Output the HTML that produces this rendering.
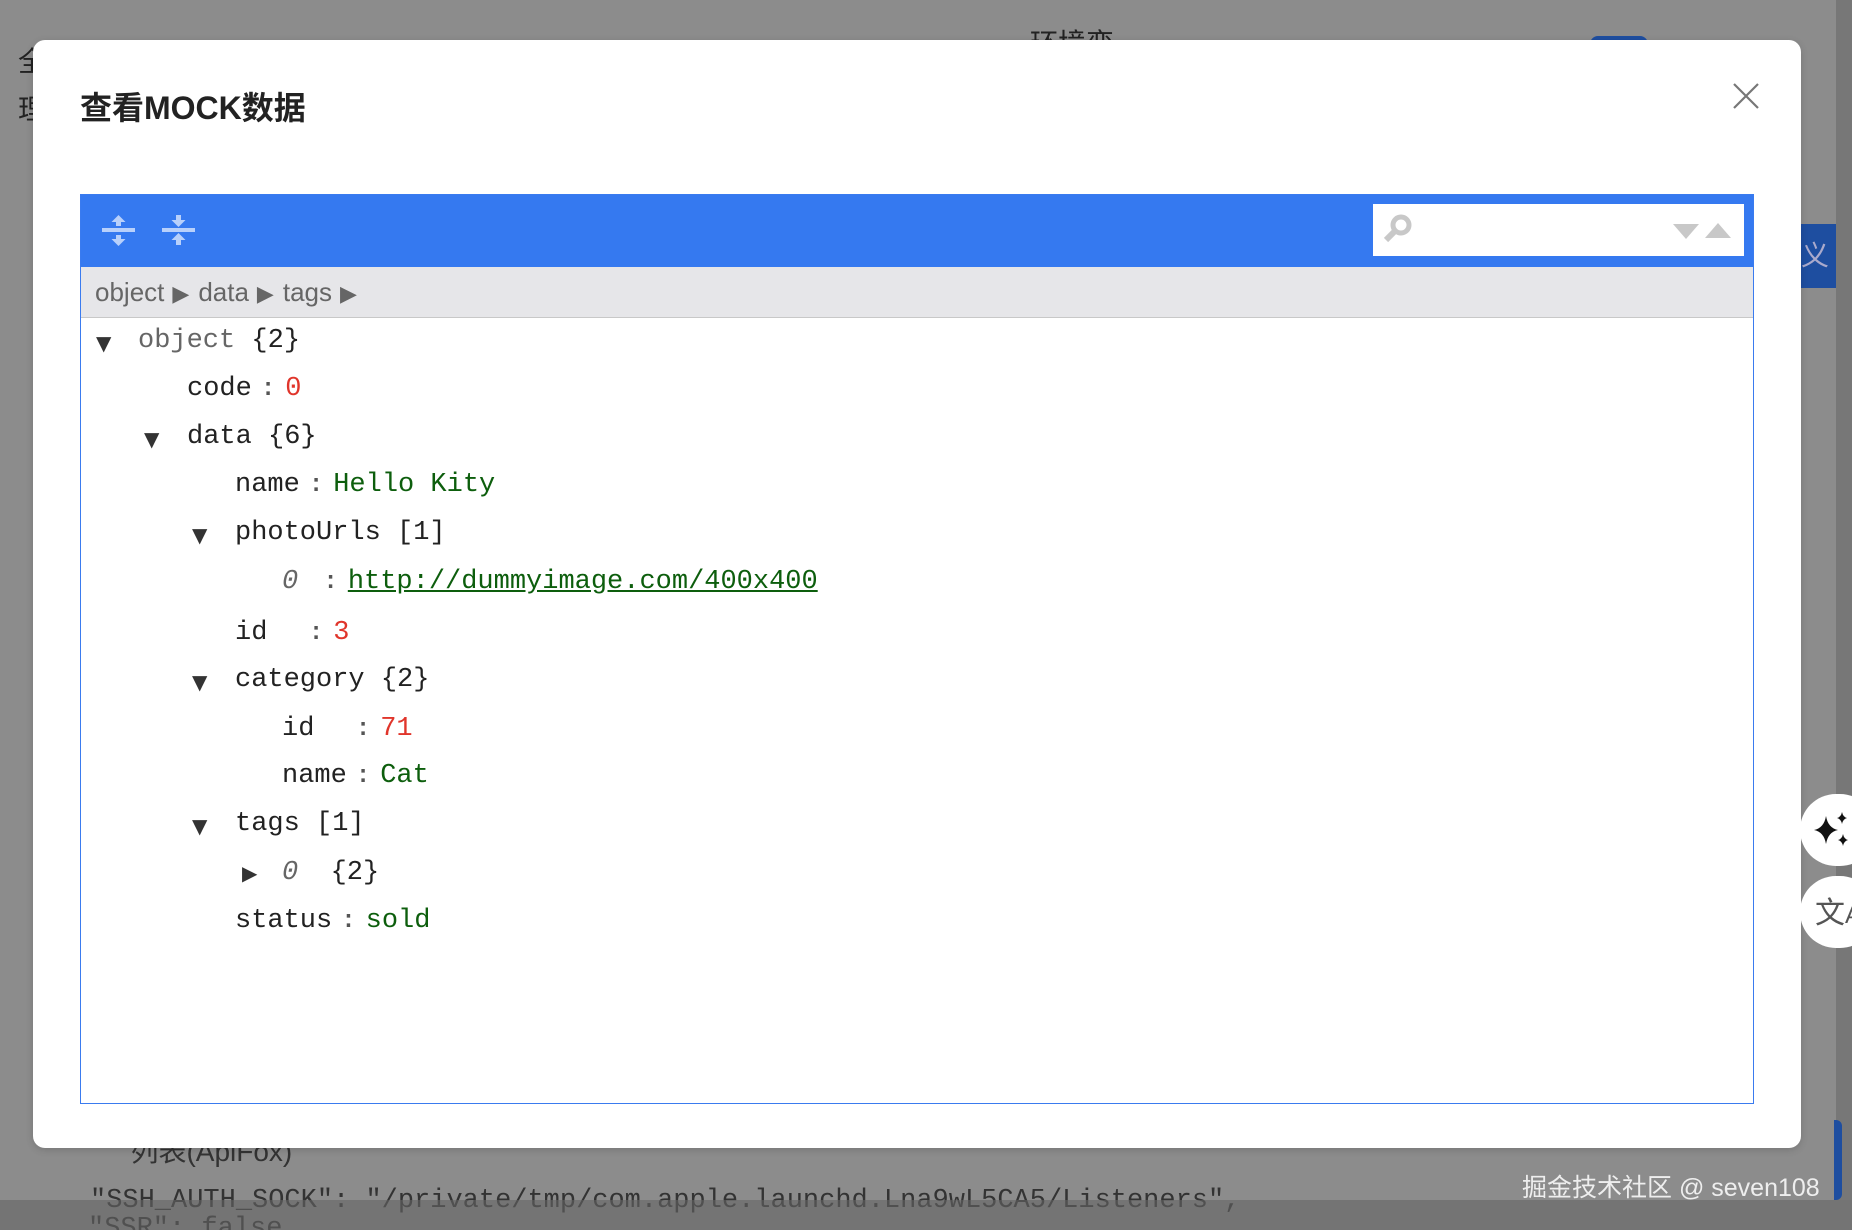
<!DOCTYPE html>
<html><head><meta charset="utf-8">
<style>
*{margin:0;padding:0;box-sizing:border-box}
html,body{width:1852px;height:1230px;overflow:hidden;background:#8c8c8c;font-family:"Liberation Sans","Noto Sans CJK SC",sans-serif;position:relative}
.abs{position:absolute}
.modal{left:33px;top:40px;width:1768px;height:1108px;background:#fff;border-radius:12px;box-shadow:0 2px 8px rgba(0,0,0,.15)}
.title{left:80px;top:83px;font-size:32px;font-weight:bold;color:#222;white-space:nowrap}
.box{left:80px;top:194px;width:1674px;height:910px;border:1px solid #3a7bef;background:#fff}
.bar{left:0;top:0;width:1672px;height:72px;background:#3579f0}
.crumb{left:0;top:72px;width:1672px;height:51px;background:#e6e6e9;border-bottom:1px solid #c8c8c8;font-size:26px;color:#666;line-height:51px;padding-left:14px;white-space:nowrap}
.crumb b{font-weight:normal;font-family:"DejaVu Sans",sans-serif;font-size:22px;margin:0 9px 0 8px}
.row{position:absolute;font-family:"Liberation Mono",monospace;font-size:27px;color:#222;white-space:pre;line-height:34px}
.tri{position:absolute;font-size:20px;color:#333;font-family:"DejaVu Sans",sans-serif;line-height:34px}
.g{color:#666}.r{color:#e0352b}.s{color:#0d5e0d}
.c{color:#555;font-weight:bold;font-size:24px;margin:0 10px 0 9px}
.u{color:#0d5e0d;text-decoration:underline}
</style></head><body>
<div class="abs" style="left:76px;top:1130px;font-size:28px;color:#333;font-family:'Liberation Sans','Noto Sans CJK SC',sans-serif">&nbsp;&nbsp;&nbsp;&nbsp;&nbsp;&nbsp;&nbsp;列表(ApiFox)</div>
<div class="abs" style="left:90px;top:1186px;font-family:'Liberation Mono',monospace;font-size:27px;color:#333;white-space:pre">"SSH_AUTH_SOCK": "/private/tmp/com.apple.launchd.Lna9wL5CA5/Listeners",</div>
<div class="abs" style="left:88px;top:1214px;font-family:'Liberation Mono',monospace;font-size:27px;color:#333">"SSR": false</div>
<div class="abs" style="left:0;top:1200px;width:1852px;height:30px;background:rgba(100,100,100,.6)"></div>
<div class="abs" style="left:18px;top:40px;font-size:28px;color:#222">全</div>
<div class="abs" style="left:18px;top:88px;font-size:28px;color:#222">理</div>
<div class="abs" style="left:1030px;top:22px;font-size:28px;color:#222">环境变</div>
<div class="abs" style="left:1590px;top:36px;width:58px;height:12px;background:#1e4ea0;border-radius:8px 8px 0 0"></div>
<div class="abs" style="left:1801px;top:224px;width:35px;height:64px;background:#1e4ea0;color:#aac;font-size:28px;line-height:64px">义</div>
<div class="abs" style="left:1836px;top:0;width:16px;height:1200px;background:#777"></div>
<div class="abs" style="left:1834px;top:1120px;width:8px;height:80px;background:#1e4ea0;border-radius:0 6px 6px 0"></div>
<div class="abs" style="left:1522px;top:1168px;font-size:25px;color:#eee;white-space:nowrap">掘金技术社区 @ seven108</div>

<div class="abs modal"></div>
<div class="abs title">查看MOCK数据</div>
<svg class="abs" style="left:1732px;top:82px" width="28" height="28" viewBox="0 0 28 28"><path d="M2 2L26 26M26 2L2 26" stroke="#777" stroke-width="2.2"/></svg>

<div class="abs box">
 <div class="abs bar">
  <svg class="abs" style="left:18px;top:14px" width="40" height="44" viewBox="0 0 40 44">
   <g fill="#b8d0fb"><rect x="3" y="19" width="33" height="4"/><path d="M19.5 6l7 7h-4.5v4h-5v-4h-4.5z"/><path d="M19.5 37l7-7h-4.5v-4h-5v4h-4.5z"/></g>
  </svg>
  <svg class="abs" style="left:78px;top:14px" width="40" height="44" viewBox="0 0 40 44">
   <g fill="#b8d0fb"><rect x="3" y="19" width="33" height="4"/><path d="M19.5 18l7-7h-4.5v-5h-5v5h-4.5z"/><path d="M19.5 24l7 7h-4.5v5h-5v-5h-4.5z"/></g>
  </svg>
  <div class="abs" style="left:1292px;top:9px;width:371px;height:52px;background:#fff">
   <svg class="abs" style="left:8px;top:9px" width="34" height="34" viewBox="0 0 34 34"><circle cx="20" cy="12" r="8" fill="none" stroke="#c8c8c8" stroke-width="5"/><path d="M14 18L5 27" stroke="#c8c8c8" stroke-width="6"/></svg>
   <svg class="abs" style="left:298px;top:18px" width="64" height="18" viewBox="0 0 64 18"><path d="M2 2h26l-13 15z" fill="#c8c8c8"/><path d="M34 16h26l-13-15z" fill="#c8c8c8"/></svg>
  </div>
 </div>
 <div class="abs crumb">object<b>▶</b>data<b>▶</b>tags<b>▶</b></div>
</div>

<div class="tri" style="left:96px;top:326px">▼</div>
<div class="row" style="left:138px;top:324px"><span class="g">object</span> {2}</div>
<div class="row" style="left:187px;top:372px">code<span class="c">:</span><span class="r">0</span></div>
<div class="tri" style="left:144px;top:422px">▼</div>
<div class="row" style="left:187px;top:420px">data {6}</div>
<div class="row" style="left:235px;top:468px">name<span class="c">:</span><span class="s">Hello Kity</span></div>
<div class="tri" style="left:192px;top:518px">▼</div>
<div class="row" style="left:235px;top:516px">photoUrls [1]</div>
<div class="row" style="left:282px;top:565px"><span class="g" style="font-style:italic">0</span> <span class="c">:</span><span class="u">http://dummyimage.com/400x400</span></div>
<div class="row" style="left:235px;top:616px">id  <span class="c">:</span><span class="r">3</span></div>
<div class="tri" style="left:192px;top:665px">▼</div>
<div class="row" style="left:235px;top:663px">category {2}</div>
<div class="row" style="left:282px;top:712px">id  <span class="c">:</span><span class="r">71</span></div>
<div class="row" style="left:282px;top:759px">name<span class="c">:</span><span class="s">Cat</span></div>
<div class="tri" style="left:192px;top:809px">▼</div>
<div class="row" style="left:235px;top:807px">tags [1]</div>
<div class="tri" style="left:242px;top:856px">▶</div>
<div class="row" style="left:282px;top:856px"><span class="g" style="font-style:italic">0</span>  {2}</div>
<div class="row" style="left:235px;top:904px">status<span class="c">:</span><span class="s">sold</span></div>

<div class="abs" style="left:1800px;top:794px;width:76px;height:72px;border-radius:36px;background:#fff"></div>
<svg class="abs" style="left:1812px;top:810px" width="40" height="40" viewBox="0 0 40 40"><path d="M14 6 Q16 18 26 20 Q16 22 14 34 Q12 22 2 20 Q12 18 14 6z" fill="#111"/><path d="M30 2 Q31 7 35 8 Q31 9 30 14 Q29 9 25 8 Q29 7 30 2z" fill="#111"/><path d="M31 24 Q32 29 36 30 Q32 31 31 36 Q30 31 26 30 Q30 29 31 24z" fill="#111"/></svg>
<div class="abs" style="left:1800px;top:876px;width:76px;height:72px;border-radius:36px;background:#fff"></div>
<div class="abs" style="left:1815px;top:888px;font-size:30px;color:#555;white-space:nowrap">文<span style="font-size:24px">A</span></div>
</body></html>
